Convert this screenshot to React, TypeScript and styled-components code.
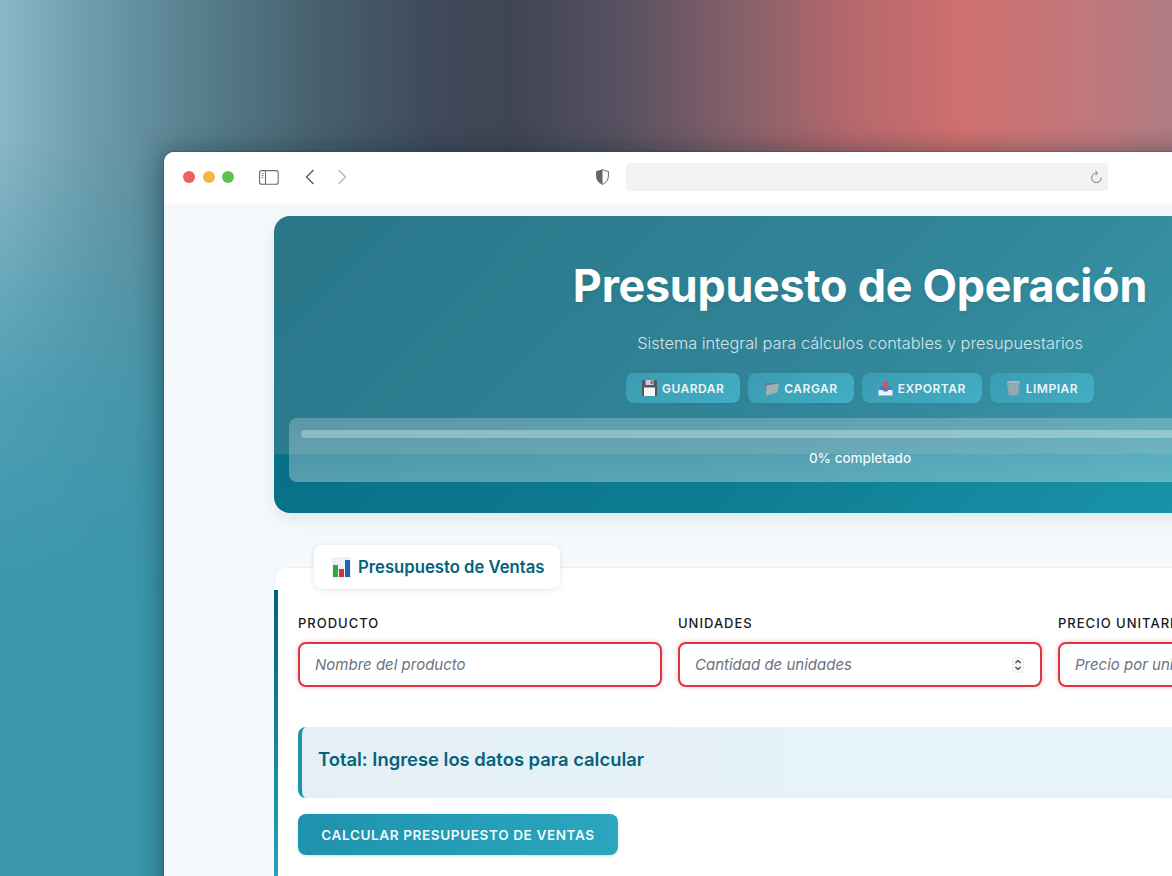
import React from "react";
import styled, { createGlobalStyle } from "styled-components";

const Global = createGlobalStyle`
  html, body { margin: 0; padding: 0; height: 100%; overflow: hidden; }
  body { font-family: Inter, "Liberation Sans", sans-serif; }
  * { box-sizing: border-box; }
`;

const Desktop = styled.div`
  width: 1172px;
  height: 876px;
  overflow: hidden;
  padding: 152px 0 0 164px;
  background:
    linear-gradient(180deg, rgba(58, 150, 172, 0) 16%, rgba(60, 151, 173, 0.75) 45%, rgba(58, 150, 172, 1) 68%),
    linear-gradient(90deg, #8ab6c6 0, #6f9cab 90px, #567e8d 200px, #48626f 310px, #3f4a5a 430px, #3f4555 510px, #55505f 615px, #86606a 740px, #b4686c 850px, #cf7070 965px, #c0787c 1090px, #b07b83 1172px);
`;

const Window = styled.div`
  width: 1392px;
  height: 760px;
  border-radius: 10px 10px 0 0;
  background: #f6f9fb;
  box-shadow: -3px 0 26px rgba(0, 30, 40, 0.42), 0 0 0 1px rgba(20, 70, 85, 0.22);
  overflow: hidden;
`;

const Toolbar = styled.div`
  height: 52px;
  background: #ffffff;
  display: flex;
  align-items: center;
  padding: 0 0 2px 19px;
`;

const Dots = styled.div`
  display: flex;
  gap: 7.5px;
  margin-right: 25px;
`;

const Dot = styled.span<{ $color: string }>`
  width: 12px;
  height: 12px;
  border-radius: 50%;
  background: ${(p) => p.$color};
`;

const ToolIcon = styled.svg<{ $mr?: number }>`
  flex: none;
  display: block;
  margin-right: ${(p) => p.$mr ?? 0}px;
`;

const UrlBar = styled.div`
  width: 482px;
  height: 28px;
  border-radius: 4px;
  background: #f2f2f2;
  display: flex;
  align-items: center;
  justify-content: flex-end;
  padding-right: 5px;
`;

const Page = styled.main`
  padding: 12px 110px 0;
`;

const Hero = styled.header`
  position: relative;
  height: 297px;
  border-radius: 16px;
  padding: 43px 15px 0;
  background: linear-gradient(135deg, #046a80 0%, #0e7d93 50%, #1f9fb5 100%);
  box-shadow: 0 6px 18px rgba(10, 90, 110, 0.1);
  overflow: hidden;
  text-align: center;
  color: #fff;

  &::before {
    content: "";
    position: absolute;
    inset: 0 0 59px 0;
    background: rgba(255, 190, 190, 0.15);
  }
`;

const HeroInner = styled.div`
  position: relative;
`;

const Title = styled.h1`
  margin: 0;
  font-size: 44.8px;
  line-height: 54px;
  font-weight: 700;
  letter-spacing: -0.25px;
  text-shadow: 0 2px 4px rgba(0, 0, 0, 0.08);
`;

const Subtitle = styled.p`
  margin: 18px 0 0;
  font-size: 16.35px;
  line-height: 24px;
  font-weight: 300;
  color: rgba(255, 255, 255, 0.8);
`;

const Actions = styled.div`
  display: flex;
  justify-content: center;
  gap: 8px;
  margin-top: 18px;
`;

const ActionButton = styled.button`
  height: 30px;
  padding: 0 16px;
  display: flex;
  align-items: center;
  gap: 5px;
  border: 0;
  border-radius: 8px;
  background: linear-gradient(135deg, #3b9cb3, #41aec3);
  color: rgba(255, 255, 255, 0.92);
  font: 600 12px Inter, sans-serif;
  letter-spacing: 0.5px;
  box-shadow: 0 1px 2px rgba(0, 0, 0, 0.05);
`;

const Progress = styled.div`
  margin-top: 15px;
  height: 64px;
  padding: 12px;
  border-radius: 8px;
  background: linear-gradient(180deg, rgba(255, 255, 255, 0.22), rgba(255, 255, 255, 0.32));
`;

const Track = styled.div`
  height: 8px;
  border-radius: 4px;
  background: rgba(255, 255, 255, 0.3);
`;

const ProgressLabel = styled.div`
  margin-top: 11px;
  font-size: 13.5px;
  line-height: 18px;
  font-weight: 500;
  color: rgba(255, 255, 255, 0.95);
`;

const Section = styled.section`
  position: relative;
  margin-top: 54px;
  height: 320px;
  border-radius: 12px;
  background: #fff;
  border: 1px solid #edf1f5;
  padding: 46px 23px 0 23px;

  &::before {
    content: "";
    position: absolute;
    left: -1px;
    top: 22px;
    bottom: 0;
    width: 4px;
    border-radius: 0 0 0 4px;
    background: linear-gradient(180deg, #04607a, #2aa3bb);
  }
`;

const Tab = styled.div`
  position: absolute;
  left: 39px;
  top: -23px;
  width: 246px;
  height: 44px;
  display: flex;
  align-items: center;
  gap: 7px;
  padding-left: 18px;
  border-radius: 8px;
  background: #fff;
  box-shadow: 0 1px 5px rgba(20, 50, 70, 0.13);
  color: #04627c;
  font-size: 16.7px;
  font-weight: 600;
`;

const Fields = styled.div`
  display: grid;
  grid-template-columns: repeat(3, 1fr);
  gap: 16px;
`;

const Field = styled.div`
  position: relative;
`;

const Label = styled.label`
  display: block;
  font-size: 13px;
  line-height: 18px;
  font-weight: 500;
  letter-spacing: 1px;
  color: #16191d;
  margin-bottom: 10px;
`;

const Input = styled.input`
  display: block;
  width: 100%;
  height: 45px;
  padding: 0 15px;
  border: 2px solid #e0343e;
  border-radius: 8px;
  background: #fff;
  box-shadow: 0 0 5px rgba(230, 50, 60, 0.3);
  font: 400 15px Inter, sans-serif;
  outline: none;

  &::placeholder {
    color: #6b7280;
    font-style: italic;
    opacity: 1;
  }
`;

const Stepper = styled.svg`
  position: absolute;
  right: 18px;
  bottom: 14px;
  display: block;
`;

const Total = styled.div`
  margin-top: 40px;
  height: 71px;
  display: flex;
  align-items: center;
  padding: 0 0 7px 16px;
  border-left: 4px solid #1f93ab;
  border-radius: 8px;
  background: linear-gradient(90deg, #e4f0f5, #e7f5fb);
  color: #04627c;
  font-size: 18.4px;
  font-weight: 600;
`;

const Calculate = styled.button`
  display: block;
  margin-top: 16px;
  width: 320px;
  height: 41px;
  border: 0;
  border-radius: 8px;
  background: linear-gradient(90deg, #1f92ad, #2aa7be);
  color: rgba(255, 255, 255, 0.95);
  font: 600 13.6px Inter, sans-serif;
  letter-spacing: 0.58px;
  box-shadow: 0 1px 3px rgba(10, 90, 110, 0.2);
`;

const Floppy = () => (
  <svg width="15" height="16" viewBox="0 0 15 16">
    <path d="M0 1.500 1.500 0H14l1 1v15H0z" fill="#54565e" />
    <rect x="3.500" y="0" width="8" height="5" fill="#c9ccd2" />
    <rect x="8.800" y="0.800" width="1.600" height="3.200" fill="#54565e" />
    <rect x="2" y="7.500" width="11" height="8.500" fill="#f6f6f8" />
  </svg>
);

const Folder = () => (
  <svg width="15" height="15" viewBox="0 0 15 15">
    <path d="M1 2h8l5-1v10L2 14z" fill="#5f7f8c" />
    <path d="M2.500 4.500 15 2.500 13.500 11.500 2 14.500z" fill="#9fb0b4" />
  </svg>
);

const Inbox = () => (
  <svg width="15" height="16" viewBox="0 0 15 16">
    <path d="M.5 10 3 6h9l2.500 4v5.500H.5z" fill="#3f80d0" />
    <path d="M.5 10h4.200l1 1.600h3.600l1-1.600h4.200v5.500H.5z" fill="#eef2f8" />
    <path d="M7.500 .5 10.800 4.500H9.200V8.500H5.800V4.500H4.200z" fill="#d9534f" />
  </svg>
);

const Trash = () => (
  <svg width="15" height="16" viewBox="0 0 15 16">
    <ellipse cx="7.500" cy="2.500" rx="6.500" ry="1.800" fill="#a9bcc2" />
    <path d="M1 2.700 2.600 15.500h9.800L14 2.700z" fill="#8aa6ae" />
    <path d="M4.500 5 5.200 14.500M7.500 5v9.500M10.500 5l-.7 9.500" stroke="#9fb5bb" strokeWidth="0.800" />
  </svg>
);

const Chart = () => (
  <svg width="19" height="21" viewBox="0 0 19 21">
    <rect x="0" y="0" width="19" height="21" fill="#eef1f5" />
    <rect x="1" y="8" width="5" height="12" fill="#2faa3a" />
    <rect x="7" y="12" width="5" height="8" fill="#d8322e" />
    <rect x="13" y="3" width="5" height="17" fill="#2560b8" />
  </svg>
);

export default function App() {
  return (
    <Desktop>
      <Global />
      <Window>
        <Toolbar>
          <Dots>
            <Dot $color="#ee5f5f" />
            <Dot $color="#f5b540" />
            <Dot $color="#5fc24f" />
          </Dots>
          <ToolIcon width="20" height="15" viewBox="0 0 20 15" fill="none" stroke="#6a6a6a" $mr={26}>
            <rect x="0.600" y="0.600" width="18.600" height="13.600" rx="2" strokeWidth="1.100" />
            <path d="M6.500 0.600v13.600" strokeWidth="1.100" />
            <path d="M2.600 3.500h2M2.600 5.500h2M2.600 7.500h2" strokeWidth="0.800" />
          </ToolIcon>
          <ToolIcon width="10" height="16" viewBox="0 0 10 16" fill="none" stroke="#5a5a5a" strokeWidth="1.400" $mr={22}>
            <path d="M8.500 1 1.500 8l7 7" />
          </ToolIcon>
          <ToolIcon width="10" height="16" viewBox="0 0 10 16" fill="none" stroke="#b5b5b5" strokeWidth="1.400" $mr={249}>
            <path d="M1.500 1l7 7-7 7" />
          </ToolIcon>
          <ToolIcon width="13" height="16" viewBox="0 0 13 16" $mr={17}>
            <path d="M6.500.6C8.300 1.600 10 2.200 12.400 2.400v5c0 3.800-2.600 6.400-5.900 8C3.200 13.800.6 11.200.6 7.400v-5C3 2.200 4.700 1.600 6.500.6z" fill="#fff" stroke="#666" strokeWidth="1" />
            <path d="M6.500.6C4.700 1.600 3 2.200.6 2.400v5c0 3.800 2.600 6.400 5.900 8z" fill="#666" />
          </ToolIcon>
          <UrlBar>
            <svg width="13" height="14" viewBox="0 0 13 14" fill="none" stroke="#777" strokeWidth="1">
              <path d="M6.500 3A4.800 4.800 0 1 0 11.300 7.800" />
              <path d="M5.500.8 7.800 3 5.500 5.200" />
            </svg>
          </UrlBar>
        </Toolbar>
        <Page>
          <Hero>
            <HeroInner>
              <Title>Presupuesto de Operación</Title>
              <Subtitle>Sistema integral para cálculos contables y presupuestarios</Subtitle>
              <Actions>
                <ActionButton><Floppy />GUARDAR</ActionButton>
                <ActionButton><Folder />CARGAR</ActionButton>
                <ActionButton><Inbox />EXPORTAR</ActionButton>
                <ActionButton><Trash />LIMPIAR</ActionButton>
              </Actions>
              <Progress>
                <Track />
                <ProgressLabel>0% completado</ProgressLabel>
              </Progress>
            </HeroInner>
          </Hero>
          <Section>
            <Tab><Chart />Presupuesto de Ventas</Tab>
            <Fields>
              <Field>
                <Label>PRODUCTO</Label>
                <Input placeholder="Nombre del producto" />
              </Field>
              <Field>
                <Label>UNIDADES</Label>
                <Input placeholder="Cantidad de unidades" />
                <Stepper width="12" height="16" viewBox="0 0 12 16" fill="none" stroke="#333" strokeWidth="1.100">
                  <rect x="0.500" y="0.500" width="11" height="15" rx="3" fill="#f7f7f7" stroke="#eee" />
                  <path d="M3.500 6 6 3.500 8.500 6M3.500 10 6 12.500 8.500 10" />
                </Stepper>
              </Field>
              <Field>
                <Label>PRECIO UNITARIO</Label>
                <Input placeholder="Precio por unidad" />
              </Field>
            </Fields>
            <Total>Total: Ingrese los datos para calcular</Total>
            <Calculate>CALCULAR PRESUPUESTO DE VENTAS</Calculate>
          </Section>
        </Page>
      </Window>
    </Desktop>
  );
}
